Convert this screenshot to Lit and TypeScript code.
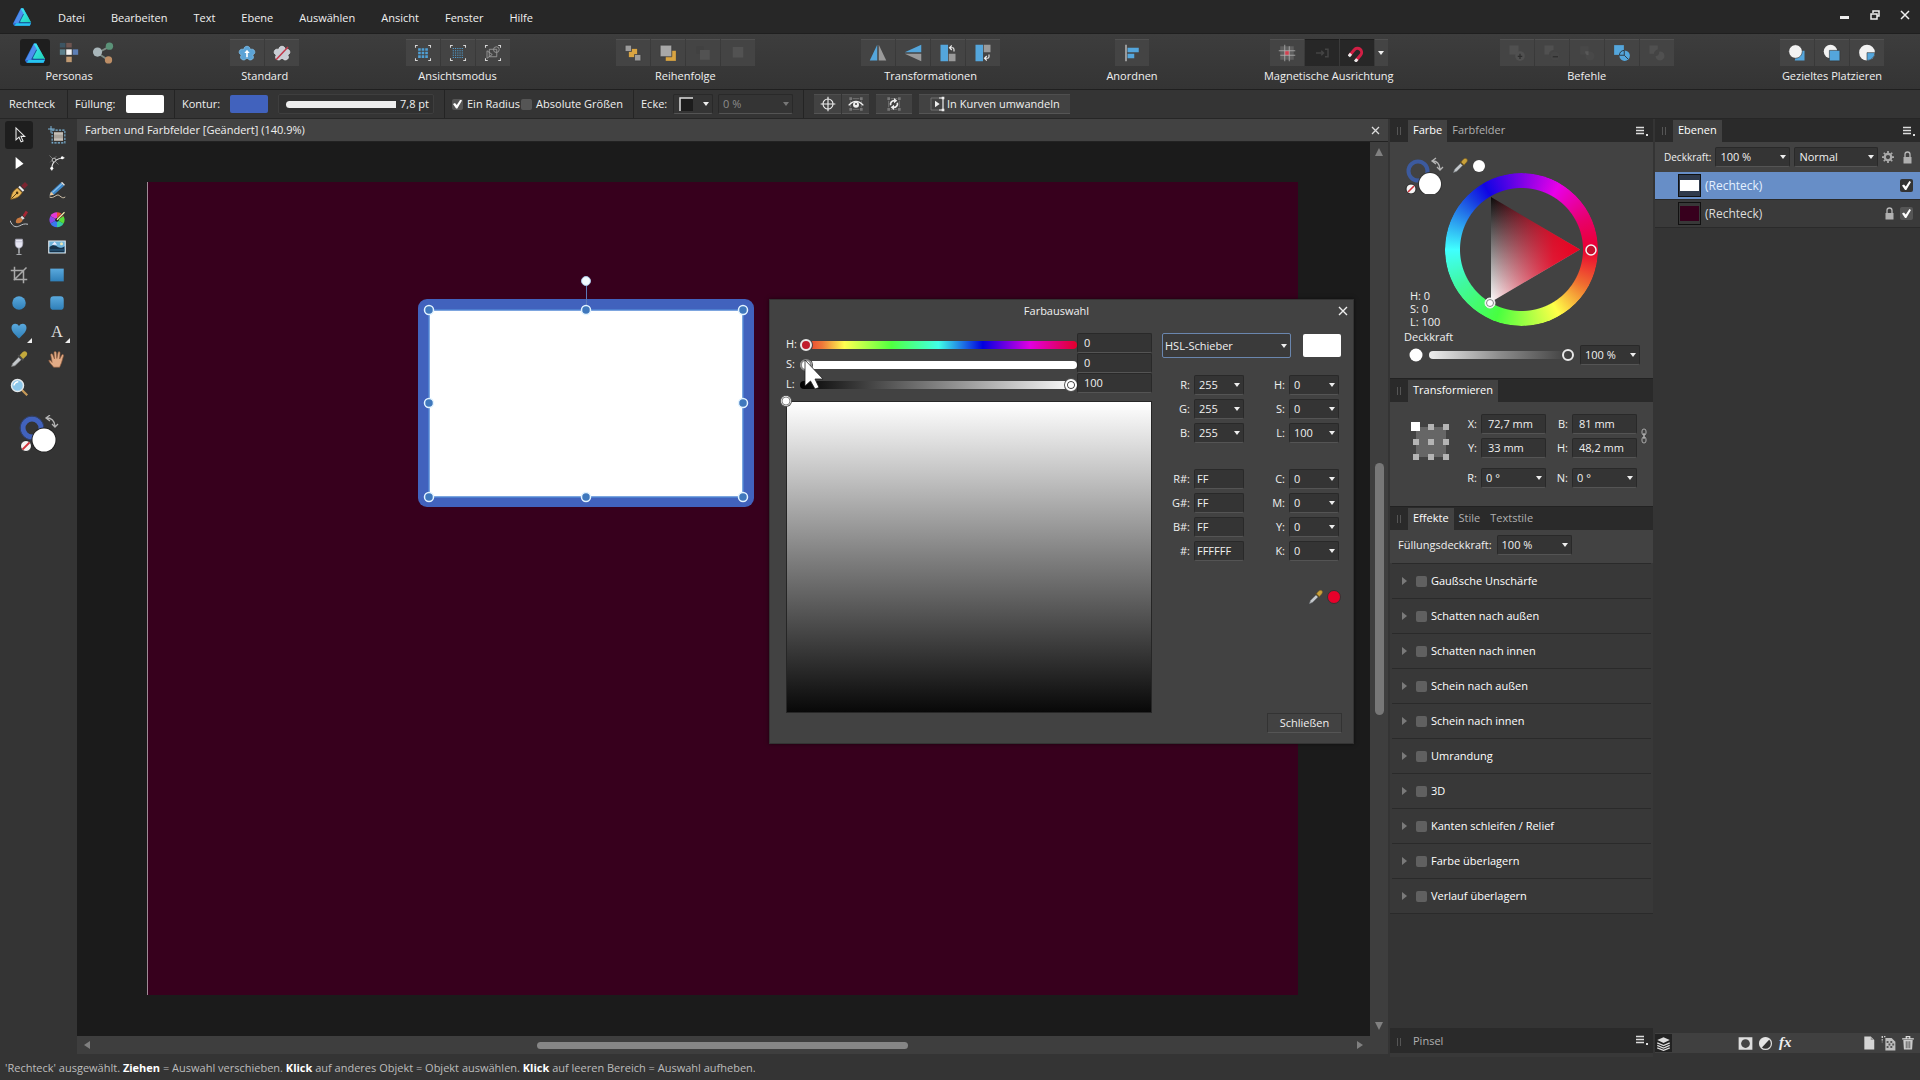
import { LitElement, html, css, svg, TemplateResult } from "lit";
import { customElement, state } from "lit/decorators.js";

const ico = (size: number, body: unknown) =>
  html`<svg width=${size} height=${size} viewBox="0 0 24 24" aria-hidden="true">${body}</svg>`;

/* ---------- Shared glyphs ---------- */
const logoBody = svg`
  <defs><linearGradient id="lg" x1="0" y1="0" x2="1" y2="1"><stop offset="0" stop-color="#3fe6ff"/><stop offset="1" stop-color="#1fd5b0"/></linearGradient></defs>
  <path d="M10.500 1.500h3L23 19l-1.500 3.500h-19L1 20z" fill="#2b6fd6"/>
  <path d="M11 1.500h2.500L23 18.500H10.500L8.600 15z" fill="url(#lg)"/>
  <path d="M10.800 2.500L2 19.500l6.200-.2L14 8z" fill="#4f8dee"/>
  <path d="M3 22.500l2-3h17.700l-1.500 3z" fill="#26c6f0"/>
  <path d="M13.800 8.500L8.500 18.800h13.800" fill="none" stroke="#124a86" stroke-width="1"/>`;

const dropper = (size: number) => ico(size, svg`
  <path d="M2 22l2-5 8-8 3 3-8 8z" fill="#c4c8cc" stroke="#6f7478" stroke-width=".8"/>
  <path d="M11 7l6 6 1.500-1.500-6-6z" fill="#5b4a20"/>
  <path d="M13 7.500c1-3 4-6 6.500-5.500 2.500.6 3 3.500 1 5.500l-3.500 3.700z" fill="#c9a13a" stroke="#7c6020" stroke-width=".8"/>`);

const nodeBox = svg`<path d="M4 7V17M20 7V17M7 4H17M7 20H17" stroke="#777" stroke-width="1.300"/>
  <path d="M2 2h4v4H2zM18 2h4v4h-4zM2 18h4v4H2zM18 18h4v4h-4z" fill="#777"/>`;

const corners = svg`<path d="M2 5V2h3M19 2h3v3M22 19v3h-3M5 22H2v-3" fill="none" stroke="#d8d8d8" stroke-width="1.400"/>`;

const flower = "M12 1c2.800 0 4.300 2.200 4.300 4.400 2.200-1 5-.5 5.900 2.100.9 2.500-.6 4.300-2.900 5 1.600 1.600 1.900 4.300-.2 5.900-2.200 1.500-4.900 1-6-1.100-.6.600-1.600.6-2.200 0-1.100 2.100-3.800 2.600-6 1.100-2.100-1.600-1.800-4.300-.2-5.900-2.300-.7-3.800-2.500-2.900-5 .9-2.600 3.700-3.100 5.900-2.100C7.700 3.200 9.200 1 12 1z";

const T = {
  personaPixel: svg`<path d="M2 1h6v5H2z" fill="#3d5563"/><path d="M9 1h6v5H9z" fill="#6e5550"/><path d="M2 8h6v6H2z" fill="#5d808c"/><path d="M9 8h6v6H9z" fill="#f2f2f2"/><path d="M16 8h6v6h-6z" fill="#5d7fb5"/><path d="M9 16h6v6H9z" fill="#c19a72"/>`,
  personaExport: svg`<path d="M6 12L19 5M6 12l12 8" stroke="#7d8a84" stroke-width="2"/><circle cx="6" cy="11" r="5" fill="#a9b6ba"/><circle cx="19" cy="4.500" r="4" fill="#5b9278"/><circle cx="18" cy="19.500" r="4" fill="#bd8e66"/>`,
  stdUp: svg`<path d=${flower} transform="translate(0 2)" fill="#5ba3d6" stroke="#83c0ea"/><path d="M12 17.500V11" stroke="#fff" stroke-width="2.200"/><path d="M8.500 12L12 7.500l3.500 4.500z" fill="#fff"/>`,
  stdNo: svg`<path d=${flower} transform="translate(0 2)" fill="#c9cdd4" stroke="#e4e6ea"/><path d="M4 21L20 4" stroke="#c0394b" stroke-width="2"/>`,
  viewGrid: svg`${corners}<path d="M5.500 5.500h3.500v3.500h-3.500zM10.200 5.500h3.500v3.500h-3.500zM15 5.500h3.500v3.500H15zM5.500 10.200h3.500v3.500h-3.500zM10.200 10.200h3.500v3.500h-3.500zM15 10.200h3.500v3.500H15zM5.500 15h3.500v3.500h-3.500zM10.200 15h3.500v3.500h-3.500zM15 15h3.500v3.500H15z" fill="#4f9fd4"/>`,
  viewDots: svg`${corners}<path d="M5 6h14M5 9h14M5 12h14M5 15h14M5 18h14" stroke="#4f9fd4" stroke-width="1.600" stroke-dasharray="1.500 1.500"/>`,
  viewOutline: svg`${corners}<g fill="none" stroke="#9a9a9a" stroke-width="1.200"><circle cx="16.500" cy="7.500" r="3.800"/><path d="M7 7h10v10H7zM4 9l7 5-7 5z"/></g>`,
  toBack: svg`<path d="M6.500 6.500h11v11h-11z" fill="#d9a441"/><path d="M1.500 1.500H10V10H1.500zM14 14h8.500v8.500H14z" fill="#9c9c9c" stroke="#3a3a3a" stroke-width="1"/>`,
  toFront: svg`<path d="M9 9h13.500v13.500H9z" fill="#d9a441"/><path d="M1.500 1.500H17V17H1.500z" fill="#a8a8a8" stroke="#3a3a3a" stroke-width="1"/>`,
  offA: svg`<path d="M3 3h10v10H3z" fill="#414141"/><path d="M8 8h13v13H8z" fill="#525252"/>`,
  offB: svg`<path d="M5 4h14v14H5z" fill="#525252"/>`,
  flipH: svg`<path d="M11 1v21H1z" fill="#54a6dc"/><path d="M13 1v21h10z" fill="#9a9a9a"/>`,
  flipV: svg`<path d="M23 11H1L23 1z" fill="#54a6dc"/><path d="M23 13H1l22 10z" fill="#9a9a9a"/>`,
  rotL: svg`<path d="M2 1h10v22H2z" fill="#54a6dc"/><path d="M13 13h9v10h-9z" fill="#9a9a9a"/><path d="M14 5h4q2 0 2 2.500V10M17 2l-3 3 3 3" fill="none" stroke="#eee" stroke-width="1.500"/>`,
  rotR: svg`<path d="M2 1h10v22H2z" fill="#54a6dc"/><path d="M13 1h9v10h-9z" fill="#9a9a9a"/><path d="M20 14v3q0 2-2 2h-4M17 16l-3 3 3 3" fill="none" stroke="#eee" stroke-width="1.500"/>`,
  align: svg`<path d="M4 1v22" stroke="#ddd" stroke-width="1.500"/><path d="M6 5h15v6H6zM6 13h9v6H6z" fill="#54a6dc"/>`,
  snapGrid: svg`<path d="M3 3h18v18H3z" fill="#5e5e5e"/><path d="M9 9h6v6H9z" fill="#d1404f"/><path d="M9 1v22M15 3v20M1 9h22M3 15h20" stroke="#b7b7b7" stroke-width="1"/>`,
  snapOff: svg`<path d="M4 12h10M11 9l3 3-3 3M16 7h4v10h-4" fill="none" stroke="#444" stroke-width="2"/>`,
  magnet: svg`<g transform="rotate(40 12 12)"><path d="M6.500 21v-10a5.500 5.500 0 0 1 11 0v10" fill="none" stroke="#d21f45" stroke-width="4"/><path d="M4.500 18h4v4.500h-4zM15.500 18h4v4.500h-4z" fill="#e8e8e8"/></g>`,
  boolOff1: svg`<path d="M2 2h12v12H2z" fill="#505050"/><circle cx="16" cy="16" r="6.500" fill="#505050"/><path d="M16 13v7M13 16.500h6" stroke="#2c2c2c" stroke-width="1.600"/>`,
  boolOff2: svg`<path d="M2 2h12v6q-6 1-6 6H2z" fill="#505050"/><circle cx="16" cy="16" r="6" fill="#464646"/><path d="M13 17h7" stroke="#2c2c2c" stroke-width="1.600"/>`,
  boolOff3: svg`<path d="M3 3h11v11H3z" fill="#484848"/><circle cx="16" cy="16" r="6" fill="#484848"/><path d="M9.500 9.500h4.500v5.500q-4.500 0-4.500-5.500z" fill="#585858"/>`,
  boolOn: svg`<path d="M1.500 1.500h13v13h-13z" fill="#54a6dc"/><circle cx="15.500" cy="15.500" r="7" fill="#54a6dc"/><path d="M8.500 15a7 7 0 0 1 6.500-6.500V15zM15 15l5 5" fill="none" stroke="#2d3a44" stroke-width="1.300"/>`,
  boolOff4: svg`<path d="M2 2h11v5q-5 2-5 6H2z" fill="#505050"/><path d="M15 10a6 6 0 1 1-5 6q5 0 5-6z" fill="#505050"/>`,
  placeA: svg`<path d="M12 9h10v13H9z" fill="#54a6dc"/><circle cx="10" cy="10" r="9" fill="#f2f2f2" stroke="#333" stroke-width=".8"/>`,
  placeB: svg`<circle cx="10" cy="10" r="9" fill="#f2f2f2"/><path d="M8.500 8.500h14v14h-14z" fill="#54a6dc" stroke="#333" stroke-width=".8"/>`,
  placeC: svg`<circle cx="12" cy="11.500" r="10.500" fill="#f2f2f2"/><path d="M12 11.500h10.500A10.500 10.500 0 0 1 12 22z" fill="#54a6dc" stroke="#333" stroke-width=".8"/>`,
};

/* ---------- Tool palette ---------- */
const tools: { name: string; body: TemplateResult<2>; more?: boolean }[] = [
  { name: "Verschieben", body: svg`<path d="M8 2.500v16l4-3.800 2.800 6.500 2.600-1.200-2.800-6.200h5z" fill="#222" stroke="#eee" stroke-width="1.400"/>` },
  { name: "Zeichenfläche", body: svg`<path d="M5.500 5.500h17v17h-17z" fill="none" stroke="#7db7dc" stroke-width="1.400" stroke-dasharray="3 1.500"/><path d="M8 8h12v12H8z" fill="#a9a39b"/><path d="M8 10.500h12M8 17.500h12" stroke="#e6e2dc"/><path d="M4 0v9M0 4h9" stroke="#7db7dc" stroke-width="1.300"/>` },
  { name: "Knoten", body: svg`<path d="M7.500 4v16L18 13z" fill="#fff"/>` },
  { name: "Ecken", body: svg`<path d="M5 22Q4 6 22 5" fill="none" stroke="#e8e8e8" stroke-width="1.500"/><path d="M2 2l12 12M11 3l-8 8" stroke="#8a8a8a"/><circle cx="5" cy="19" r="2" fill="#fff"/><circle cx="19" cy="5" r="2" fill="#fff"/><circle cx="8" cy="8" r="2.500" fill="#333" stroke="#ddd"/>` },
  { name: "Zeichenstift", body: svg`<path d="M1 23C2 16 4 11 10 8l6 6c-3 6-8 8-15 9z" fill="#e9b758" stroke="#8a5f1c"/><path d="M2 22l7-7" stroke="#4a3410" stroke-width="1.200"/><circle cx="9.500" cy="14.500" r="1.700" fill="#4a3410"/><path d="M11 7l2-2 6 6-2 2z" fill="#eee"/><path d="M15 5l5-5 4 4-5 5z" fill="#7b2430"/>` },
  { name: "Bleistift", body: svg`<path d="M2 18l2-5L17 1l4.500 4L8 17z" fill="#3f88c8"/><path d="M6 14L18.500 2.500" stroke="#8bc2ee" stroke-width="1.500"/><path d="M2 18l2-5 4 4z" fill="#f0c898"/><path d="M17 1l2-1 3.500 3.500-1 1.500z" fill="#e4e4e4"/><path d="M2 20c6 3 9-5 13-2s5 4 8 2" fill="none" stroke="#d5c6ae" stroke-width="1.300"/>` },
  { name: "Vektorpinsel", body: svg`<path d="M8 17c-1-4 2-7 6-7l3 3c-1 4-5 6-9 4z" fill="#c9793f"/><path d="M14 10l2-2.500 3.500 3.500L17 13z" fill="#ddd"/><path d="M17 7l4-6 3 2-4.500 7z" fill="#a52633"/><path d="M0 14c4 10 9 9 13 7s6-3 11-2" fill="none" stroke="#c4cacf" stroke-width="1.300"/>` },
  { name: "Farbverlauf", body: svg`<circle cx="12" cy="13" r="10" fill="#333"/><path d="M12 13L12 3A10 10 0 0 0 3.300 8z" fill="#e33ad4"/><path d="M12 13L3.300 8A10 10 0 0 0 3.300 18z" fill="#8848e8"/><path d="M12 13L3.300 18A10 10 0 0 0 12 23z" fill="#3a76f0"/><path d="M12 13v10A10 10 0 0 0 20.700 18z" fill="#37c8a0"/><path d="M12 13l8.700 5A10 10 0 0 0 20.700 8z" fill="#57dd38"/><path d="M12 13l8.700-5A10 10 0 0 0 12 3z" fill="#ee4a3a"/><circle cx="12" cy="13" r="2.500" fill="#222"/><path d="M12 13L22 3" stroke="#222" stroke-width="3"/><path d="M12 13L22 3" stroke="#f4f4b0" stroke-width="1.600"/>` },
  { name: "Transparenz", body: svg`<path d="M7.500 1.500h9c1.500 7 0 12-4.500 12S6 8.500 7.500 1.500z" fill="#e6e6f2" stroke="#a7a7b8"/><path d="M8 5h8" stroke="#b9b9cf"/><path d="M12 13.500v7" stroke="#cfd2d8" stroke-width="1.600"/><path d="M7.500 22.300q4.500-2.800 9 0z" fill="#cfd2d8"/>` },
  { name: "Bild platzieren", body: svg`<path d="M1 4h22v16H1z" fill="#6fb4dc" stroke="#dfe6ea" stroke-width="1.500"/><path d="M2 12c5-4 8-2 11 0s6 1 9-1v8H2z" fill="#16324a"/><path d="M5 9l4-4 3 4z" fill="#eef"/><circle cx="18" cy="7.500" r="2" fill="#efe6b2"/><path d="M2 16h20" stroke="#2b5f86" stroke-width="1.500"/>` },
  { name: "Beschneiden", body: svg`<path d="M6 1v17h17M1 6h17v17M5 19L22 2" fill="none" stroke="#a9a9a9" stroke-width="2"/>` },
  { name: "Rechteck", body: svg`<path d="M3 3.500h18v17H3z" fill="url(#blue)"/>` },
  { name: "Ellipse", body: svg`<circle cx="12" cy="12" r="9" fill="url(#blue)"/>` },
  { name: "Abgerundetes Rechteck", body: svg`<rect x="3" y="3" width="18" height="18" rx="4.500" fill="url(#blue)"/>` },
  { name: "Herz", more: true, body: svg`<path d="M12 22C7 16.500 2 13 2 7.500 2 1.500 9.500.5 12 5.500 14.500.5 22 1.500 22 7.500 22 13 17 16.500 12 22z" fill="url(#blue)"/>` },
  { name: "Grafiktext", more: true, body: svg`<text x="12" y="20" text-anchor="middle" font-family="Liberation Serif, serif" font-size="22" fill="#e0e0e0">A</text>` },
  { name: "Farbpipette", body: svg`<path d="M2 22l1.500-4 8-8.500 3.500 3.500-8.500 8z" fill="#c4c8cc" stroke="#777"/><path d="M10 7.500l7 7 1.500-2-6.500-6.500z" fill="#4a4a4a"/><path d="M13 7l4-4.500q3-2 5 .3t0 5L17.500 12z" fill="#c3a93c"/>` },
  { name: "Ansicht", body: svg`<path d="M7.500 23c-2-3-5.500-5.500-6.500-9 1.500-1 3 .5 4.500 2.500L3.500 6c1-1.500 2.500-1 3 .5L8.700 12 8 3c1-1.500 2.700-1.200 3 .3l.8 8L13.500 3c1-1.200 2.700-.7 2.600.8l-.6 8.200 3-5.500c1-1 2.500-.3 2.200 1.200L18 17l-2.500 6z" fill="#e2ab86" stroke="#8d5b3d" stroke-width=".9"/>` },
  { name: "Zoom", body: svg`<path d="M16 16l7 7" stroke="#c79a58" stroke-width="3"/><circle cx="10" cy="10" r="8" fill="#8cc7ea" stroke="#e4e9ec" stroke-width="2"/><path d="M5 10q2-5 6-5" fill="none" stroke="#fff" stroke-width="1.700"/>` },
];

const effects = ["Gaußsche Unschärfe", "Schatten nach außen", "Schatten nach innen", "Schein nach außen", "Schein nach innen",
  "Umrandung", "3D", "Kanten schleifen / Relief", "Farbe überlagern", "Verlauf überlagern"];

const groups: { label: string; cls?: string; buttons: { name: string; body: unknown; on?: boolean }[] }[] = [
  { label: "Personas", cls: "personas", buttons: [
    { name: "Designer-Persona", body: logoBody, on: true }, { name: "Pixel-Persona", body: T.personaPixel }, { name: "Export-Persona", body: T.personaExport }] },
  { label: "Standard", buttons: [{ name: "Standard übernehmen", body: T.stdUp }, { name: "Standard zurücksetzen", body: T.stdNo }] },
  { label: "Ansichtsmodus", buttons: [{ name: "Pixel", body: T.viewGrid }, { name: "Retina", body: T.viewDots }, { name: "Kontur", body: T.viewOutline }] },
  { label: "Reihenfolge", buttons: [{ name: "Nach hinten", body: T.toBack }, { name: "Zurück", body: T.toFront }, { name: "Vorwärts", body: T.offA }, { name: "Nach vorn", body: T.offB }] },
  { label: "Transformationen", buttons: [{ name: "Horizontal spiegeln", body: T.flipH }, { name: "Vertikal spiegeln", body: T.flipV }, { name: "Links drehen", body: T.rotL }, { name: "Rechts drehen", body: T.rotR }] },
  { label: "Anordnen", buttons: [{ name: "Ausrichten", body: T.align }] },
  { label: "Magnetische Ausrichtung", cls: "snap", buttons: [{ name: "Raster", body: T.snapGrid }, { name: "An Pixeln", body: T.snapOff, on: true }, { name: "Magnet", body: T.magnet, on: true }] },
  { label: "Befehle", buttons: [{ name: "Addieren", body: T.boolOff1 }, { name: "Subtrahieren", body: T.boolOff2 }, { name: "Schnittmenge", body: T.boolOff3 }, { name: "Aufteilen", body: T.boolOn }, { name: "Kombinieren", body: T.boolOff4 }] },
  { label: "Gezieltes Platzieren", buttons: [{ name: "Dahinter", body: T.placeA }, { name: "Davor", body: T.placeB }, { name: "Innen", body: T.placeC }] },
];

@customElement("app-root")
export class AppRoot extends LitElement {
  @state() private tool = "Verschieben";

  static styles = css`
    :host {
      display: flex;
      flex-direction: column;
      min-height: 100vh;
      background: #343434;
      color: #f0f0f0;
      font: 11px/16px "Open Sans", "Noto Sans", sans-serif;
      overflow: hidden;
    }
    * { box-sizing: border-box; }
    svg { display: block; flex: none; }
    button, input, select { font: inherit; color: inherit; margin: 0; border-radius: 0; }
    button { background: none; border: 0; padding: 0; display: grid; place-items: center; }
    a { color: inherit; text-decoration: none; }
    .defs { position: absolute; width: 0; height: 0; }

    .menubar { display: flex; align-items: center; height: 33px; padding: 0 10px 0 12px; gap: 26px; background: #272727; }
    .menubar nav { display: flex; gap: 26px; flex: 1; padding-top: 2px; }
    .window { display: flex; gap: 20px; padding-bottom: 4px; }

    .toolbar { display: flex; justify-content: space-between; height: 57px; padding: 5px 36px 0 20px;
      background: linear-gradient(#3d3d3d, #343434); border-top: 1px solid #1f1f1f; border-bottom: 1px solid #1f1f1f; }
    .group { display: flex; flex-direction: column; align-items: center; gap: 2px; }
    .group .btns { display: flex; gap: 1px; }
    .group button { width: 34px; height: 27px; background: #444; border-top: 1px solid #505050; }
    .group button.on { background: #272727; border-color: #1d1d1d; }
    .group button.arrow { width: 13px; }
    .personas { padding-right: 6px; }
    .personas .btns { gap: 4px; }
    .personas button { width: 30px; background: none; border: 0; }
    .personas button.on { background: #1e1e1e; border-radius: 3px; }

    .context { display: flex; align-items: center; height: 29px; background: #343434; border-bottom: 1px solid #262626; white-space: nowrap; }
    .sect { display: flex; flex: none; align-items: center; justify-content: space-between; height: 28px; padding: 0 10px 0 7px; border-right: 1px solid #242424; }
    .s1 { width: 68px; padding-left: 9px; }
    .s2 { width: 107px; }
    .s3 { width: 270px; }
    .s4 { width: 189px; }
    .s5 { width: 170px; }
    .s6 { gap: 7px; padding-left: 10px; border: 0; }
    .swatch { width: 38px; height: 18px; border-radius: 2px; background: #fff; }
    .swatch.blue { background: #4162bd; }
    .stroke { display: flex; align-items: center; gap: 4px; width: 156px; height: 20px; padding: 0 4px 0 7px; background: #303030; border: 1px solid #3e3e3e; border-radius: 2px; }
    .bar { flex: 1; height: 7px; background: #eee; border-radius: 4px 0 0 4px; }
    .pair { display: flex; gap: 1px; }
    .flat { height: 20px; min-width: 27px; background: #424242; border-top: 1px solid #4e4e4e; border-bottom: 1px solid #555; }
    .flat.wide { width: 36px; }
    .flat.text { display: flex; align-items: center; gap: 2px; padding: 0 10px; }
    label { display: flex; align-items: center; gap: 4px; }

    input[type="checkbox"] { appearance: none; width: 11px; height: 11px; background: #555; border-radius: 2px; display: grid; place-items: center; flex: none; }
    input[type="checkbox"]:checked::before { content: ""; width: 9px; height: 9px; background: #fff;
      clip-path: polygon(0 50%, 22% 38%, 42% 62%, 82% 0, 100% 10%, 48% 100%, 34% 100%); }

    .field { height: 20px; width: 100%; min-width: 0; padding: 0 6px; background: #343434; border: 1px solid #292929; border-bottom-color: #545454; border-radius: 2px; outline: 0; }
    input.field { padding-bottom: 2px; }
    input.field.hex { padding: 0 2px 2px; }
    select.field { appearance: none; padding: 0 4px; }
    .sel { position: relative; display: block; flex: none; }
    .sel::after { content: ""; position: absolute; right: 4px; top: 8px; border: 3px solid transparent; border-top: 4px solid #eee; border-bottom: 0; pointer-events: none; }
    .sel.dim { color: #8c8c8c; }
    .sel.dim::after { border-top-color: #777; }
    .sel.w40 { width: 40px; } .sel.w75 { width: 75px; } .sel.w84 { width: 84px; } .sel.w129 { width: 129px; }
    .corner { position: absolute; left: 6px; top: 3px; pointer-events: none; }

    .body { display: grid; grid-template-columns: 75px minmax(0, 1fr) 263px 265px; gap: 2px; flex: 1; }

    .tools { padding-top: 2px; }
    .toolgrid { display: grid; grid-template-columns: 28px 28px; gap: 0 10px; padding-left: 5px; }
    .toolgrid button { position: relative; width: 28px; height: 28px; border-radius: 3px; }
    .toolgrid button.on { background: #1e1e1e; }
    .toolgrid button.more::after { content: ""; position: absolute; right: 1px; bottom: 2px; border: solid transparent; border-width: 0 0 5px 5px; border-bottom-color: #eee; }
    .well { margin: 14px 0 0 19px; display: block; }

    .doc { display: grid; grid-template: 23px minmax(0, 1fr) 18px / minmax(0, 1fr) 18px; padding-bottom: 3px; }
    .doctab { grid-column: 1 / 3; display: flex; align-items: center; justify-content: space-between; padding: 0 8px; background: #424242; border-bottom: 1px solid #222; }
    .canvas { position: relative; overflow: hidden; background: #1b1b1b; }
    .board { position: absolute; left: 70px; top: 40px; width: 1151px; height: 813px; background: #37001d; border-left: 1px solid #a08a96; }
    .sel-rect { position: absolute; left: 335px; top: 130px; }
    .vs, .hs { display: flex; align-items: center; justify-content: space-between; background: #3e3e3e; }
    .vs { flex-direction: column; padding: 6px 0; }
    .hs { grid-column: 1 / 3; padding: 0 24px 0 6px; }
    .vs i { width: 9px; height: 252px; margin-top: 307px; margin-bottom: auto; border-radius: 5px; background: #777; }
    .hs i { height: 7px; width: 371px; margin-left: 446px; margin-right: auto; border-radius: 4px; background: #868686; }

    .dialog { position: absolute; left: 769px; top: 299px; width: 585px; background: #424242; border: 1px solid #333; box-shadow: 0 0 4px #0008; }
    .dtitle { display: flex; align-items: center; height: 22px; padding: 0 5px; }
    .dtitle h2 { flex: 1; margin: 0; font-size: 11px; font-weight: 400; text-align: center; }
    .dbody { display: grid; grid-template-columns: 366px 180px; gap: 10px; padding: 11px 11px 10px 16px; }
    .sliders { display: grid; grid-template-columns: 14px 277px 75px; align-items: center; margin-bottom: 8px; }
    .sliders label { padding-top: 2px; }
    .sliders input[type="range"] { margin-top: 3px; }
    input[type="range"] { appearance: none; width: 100%; height: 8px; border-radius: 4px; outline: 0; }
    input[type="range"]::-webkit-slider-thumb { appearance: none; width: 12px; height: 12px; border-radius: 6px; border: 2px solid #e8e8e8; background: transparent; box-shadow: 0 0 0 1px #444; }
    .hue { background: linear-gradient(90deg, #e2242a, #f0783a 8%, #ffff50 16%, #50ff40 33%, #40ffe8 50%, #0000e0 66%, #e000e0 83%, #e2002a); }
    .hue::-webkit-slider-thumb { background: #c01c2c !important; }
    .satr { background: #fff; }
    .lumr { background: linear-gradient(90deg, #000, #111 5%, #fff); }
    .lumr::-webkit-slider-thumb { background: #fff !important; border-color: #fff !important; box-shadow: inset 0 0 0 1px #444, 0 0 0 1px #555 !important; }
    .satr::-webkit-slider-thumb { border-color: #888 !important; }
    .ramp { position: relative; height: 312px; margin-bottom: 20px; border: 1px solid #262626; background: linear-gradient(#fff, #808080 50%, #080808); }
    .ramp svg { position: absolute; left: -8px; top: -8px; }
    .right { display: flex; flex-direction: column; }
    .modes { display: flex; gap: 12px; }
    .modes .field { height: 25px; background: #3a3a3a; border: 1px solid #6a86ae; padding: 0 2px; }
    .modes .sel::after { top: 11px; }
    .modes .swatch { height: 23px; margin-top: 1px; }
    .nums { display: grid; grid-template-columns: 28px 50px 37px 50px; gap: 4px; margin-top: 17px; }
    .nums + .nums { margin-top: 26px; }
    .nums label { justify-content: flex-end; }
    .picker { display: flex; justify-content: flex-end; align-items: center; gap: 2px; margin-top: 28px; }
    .close { margin: auto 0 0 auto; width: 75px; height: 20px; background: #424242; border: 1px solid #333; border-bottom-color: #555; }
    .pointer { position: absolute; left: 803px; top: 360px; }

    .col { display: flex; flex-direction: column; background: #383838; }
    .tabs { display: flex; align-items: flex-end; height: 23px; padding: 0 4px 0 7px; background: #2a2a2a; }
    .tabs .grip { width: 4px; height: 8px; margin: 0 7px 7px 0; border: solid #555; border-width: 0 1px; }
    .tabs button { height: 22px; padding: 0 5px 2px; color: #b0b0b0; }
    .tabs button.on { background: #424242; color: #fff; }
    .tabs .menu { height: 14px; padding: 0; margin: 0 0 4px auto; }
    .tabs.sub { height: 24px; border-top: 1px solid #222; }
    .color { padding: 14px 13px 13px 14px; background: #424242; }
    .color > label { margin-top: 1px; }
    .colortop { position: relative; display: flex; }
    .colorleft { display: flex; flex-direction: column; justify-content: space-between; width: 41px; height: 172px; }
    .hsl { line-height: 13px; padding-left: 6px; white-space: nowrap; display: grid; }
    .wheel { position: relative; width: 153px; height: 153px; margin-top: 17px; }
    .ring { position: absolute; inset: 0; border-radius: 50%;
      background: conic-gradient(from 90deg, #ea0030, #f07030 30deg, #ffff48 60deg, #48ff40 110deg, #40f8a0 150deg, #40ffff 180deg, #1840e0 225deg, #1004e4 240deg, #e800e8 300deg, #e8006a 335deg, #ea0030);
      -webkit-mask: radial-gradient(circle, transparent 61px, #000 62px); mask: radial-gradient(circle, transparent 61px, #000 62px); }
    .wheel svg { position: absolute; left: 0; top: 0; }
    .pick2 { position: absolute; left: 48px; top: 1px; display: flex; align-items: center; gap: 3px; }
    .opacity { display: grid; grid-template-columns: 14px 145px 60px; align-items: center; gap: 6px; padding-left: 5px; }
    .opacity input { background: linear-gradient(90deg, #eee, #8a8a8a 50%, #3a3a3a); }

    .transform { display: grid; grid-template-columns: 58px 21px 65px 18px 65px 6px; gap: 4px; padding: 12px 0 18px 4px; background: #424242; }
    .transform label { justify-content: flex-end; }
    .anchor { grid-area: 1 / 1 / 4 / 2; margin: 8px 0 0 17px; }
    .gap { margin-top: 6px; }
    .link { grid-area: 1 / 6 / 3 / 7; align-self: center; }
    .filldeck { display: flex; align-items: center; gap: 5px; height: 33px; padding: 0 8px 4px; background: #424242; }
    .effect { height: 35px; display: flex; align-items: center; gap: 9px; padding-left: 10px; border-top: 1px solid #2a2a2a; margin: 0 2px; }
    .effects { border-bottom: 1px solid #2a2a2a; }
    .effect::before { content: ""; border: 4px solid transparent; border-left: 5px solid #7a7a7a; border-right: 0; }
    .effect label { color: #fff; }
    .effect input { background: #606060; }
    .fill { flex: 1; background: #343434; }
    .tabs.brush { margin-bottom: 4px; height: 25px; }
    .tabs.brush .menu { margin-bottom: 6px; }

    .layers { background: #343434; display: flex; flex-direction: column; }
    .lopts { display: flex; align-items: center; gap: 4px; height: 30px; padding: 0 8px 0 9px; background: #424242; }
    .lopts label { font-size: 10px; }
    .lopts svg:last-child { margin-left: auto; }
    .layer { display: flex; align-items: center; gap: 4px; height: 28px; padding: 0 7px 0 23px; background: #3a3a3a; border-bottom: 1px solid #2a2a2a; color: #dcdcdc; font-size: 12px; }
    .layer.on { background: #678ec7; color: #e4f0ff; }
    .layer span { flex: 1; }
    .thumb { width: 23px; height: 23px; border: 1px solid #111; background: #2f3a4c; padding: 5px 1px; }
    .thumb i { display: block; height: 100%; background: #fff; }
    .thumb.wine { background: #383838; padding: 3px 1px; }
    .thumb.wine i { background: #37001d; }
    .layer input[type="checkbox"] { width: 13px; height: 13px; margin-left: 2px; }
    .layer.on input[type="checkbox"] { background: #333; }
    .lbar { display: flex; align-items: center; justify-content: space-between; height: 20px; padding: 0 5px 0 0; background: #404040; margin-bottom: 4px; }
    .lbar div { display: flex; gap: 5px; }
    .lbar .dark { background: #222; width: 17px; height: 18px; }

    .status { height: 23px; padding: 3px 5px; color: #bdbdbd; }
    .status b { color: #fff; }
  `;

  private field(id: string, label: string, value: string, drop: boolean, extra = "") {
    return html`<label for=${id} class=${extra}>${label}</label>
      ${drop
        ? html`<span class="sel ${extra}"><select class="field" id=${id}><option>${value}</option></select></span>`
        : html`<input class="field ${extra}" id=${id} .value=${value} />`}`;
  }

  private well() {
    return html`<svg class="well" width="40" height="38" viewBox="0 0 40 38" aria-hidden="true">
      <circle cx="13" cy="13" r="9" fill="none" stroke="#4162bd" stroke-width="5"/>
      <circle cx="13" cy="13" r="12" fill="none" stroke="#30406c"/>
      <circle cx="25" cy="25" r="12.500" fill="#222"/><circle cx="25" cy="25" r="11.500" fill="#fff"/>
      <circle cx="7" cy="31" r="5.500" fill="#f4f4f4" stroke="#222"/><path d="M3.500 34.500l7-7" stroke="#d0343c" stroke-width="1.800"/>
      <path d="M28 3q7 0 8 8M31 0l-4 3 4 3M33 9l3 3 3-3" fill="none" stroke="#b5b5b5" stroke-width="1.300"/></svg>`;
  }

  private menuIcon() {
    return html`<button class="menu" aria-label="Bedienfeldmenü"><svg width="14" height="11" viewBox="0 0 14 11"><path d="M1 1.500h8M1 4.500h8M1 7.500h8" stroke="#ddd" stroke-width="1.500"/><path d="M11 8h2v2h-2z" fill="#ddd"/></svg></button>`;
  }

  private tri(d: string) {
    return html`<svg width="8" height="8" viewBox="0 0 8 8" aria-hidden="true"><path d=${d} fill="#808080"/></svg>`;
  }

  private lock() {
    return html`<svg width="9" height="13" viewBox="0 0 9 13" aria-hidden="true"><path d="M2 6V3.500a2.500 2.500 0 0 1 5 0V6" fill="none" stroke="#b8b8b8" stroke-width="1.300"/><path d="M.5 6h8v6.500h-8z" fill="#b0b0b0"/></svg>`;
  }

  private renderTop() {
    return html`
      <header class="menubar">
        ${ico(20, logoBody)}
        <nav>${["Datei", "Bearbeiten", "Text", "Ebene", "Auswählen", "Ansicht", "Fenster", "Hilfe"].map((m) => html`<a href="#">${m}</a>`)}</nav>
        <div class="window">
          <button aria-label="Minimieren"><svg width="10" height="10" viewBox="0 0 10 10"><path d="M0 6h9v3H0z" fill="#eee"/></svg></button>
          <button aria-label="Wiederherstellen"><svg width="10" height="10" viewBox="0 0 10 10"><path d="M3 3V1h6v5H7M1 4h6v5H1z" fill="none" stroke="#eee" stroke-width="1.500"/></svg></button>
          <button aria-label="Schließen"><svg width="10" height="10" viewBox="0 0 10 10"><path d="M1 1l8 8M9 1L1 9" stroke="#eee" stroke-width="1.500"/></svg></button>
        </div>
      </header>
      <div class="toolbar">
        ${groups.map((g) => html`<div class="group ${g.cls ?? ""}">
          <div class="btns">
            ${g.buttons.map((b) => html`<button class=${b.on ? "on" : ""} aria-label=${b.name}>${ico(g.cls === "personas" ? 22 : 18, b.body)}</button>`)}
            ${g.cls === "snap" ? html`<button class="arrow" aria-label="Optionen"><svg width="6" height="4" viewBox="0 0 6 4"><path d="M0 0h6L3 4z" fill="#eee"/></svg></button>` : ""}
          </div><span>${g.label}</span></div>`)}
      </div>
      <div class="context">
        <div class="sect s1">Rechteck</div>
        <div class="sect s2">Füllung:<button class="swatch" aria-label="Füllung"></button></div>
        <div class="sect s3">Kontur:<button class="swatch blue" aria-label="Kontur"></button>
          <div class="stroke"><span class="bar"></span>7,8 pt</div></div>
        <div class="sect s4">
          <label><input type="checkbox" checked />Ein Radius</label>
          <label><input type="checkbox" />Absolute Größen</label>
        </div>
        <div class="sect s5"><label for="ecke">Ecke:</label>
          <span class="sel w40"><select class="field" id="ecke" aria-label="Ecke"></select>
            <svg class="corner" width="14" height="14" viewBox="0 0 14 14"><path d="M1 1h13v13H1z" fill="#1c1c1c"/><path d="M1 14V1h13" fill="none" stroke="#ddd" stroke-width="1.500"/></svg></span>
          <span class="sel dim w75"><select class="field" aria-label="Eckenradius"><option>0 %</option></select></span></div>
        <div class="sect s6">
          <div class="pair">
            <button class="flat" aria-label="Ziel">${ico(16, svg`<circle cx="12" cy="12" r="7.500" fill="none" stroke="#eee" stroke-width="1.700"/><path d="M12 1v22M1 12h22" stroke="#eee" stroke-width="1.700"/>`)}</button>
            <button class="flat" aria-label="Auswahlrahmen">${ico(16, svg`${nodeBox}<path d="M1 14Q12 2 23 14" fill="none" stroke="#eee" stroke-width="2"/><circle cx="12" cy="13" r="4.500" fill="#eee"/><circle cx="12" cy="12" r="1.500" fill="#444"/>`)}</button>
          </div>
          <button class="flat wide" aria-label="Aktualisieren">${ico(16, svg`${nodeBox}<path d="M7 14a5.500 5.500 0 0 1 6-7M17 10a5.500 5.500 0 0 1-6 7" fill="none" stroke="#eee" stroke-width="2.500"/><path d="M12 3l5 4-5 4zM12 13l-5 4 5 4z" fill="#eee"/>`)}</button>
          <button class="flat text">${ico(16, svg`<path d="M3 3h18M3 21h18M3 3v18" stroke="#777" stroke-width="1.300"/><path d="M15 3h6v18h-6" fill="none" stroke="#eee" stroke-width="1.800"/><path d="M9 7v10l7-5z" fill="#eee"/><path d="M19 1h4v4h-4zM19 19h4v4h-4z" fill="#eee"/>`)}In Kurven umwandeln</button>
        </div>
      </div>`;
  }

  private renderDoc() {
    const pts = [[95, 46], [252, 46], [409, 46], [95, 139], [409, 139], [95, 233], [252, 233], [409, 233]];
    return html`<main class="doc">
      <div class="doctab"><span>Farben und Farbfelder [Geändert] (140.9%)</span>
        <button aria-label="Dokument schließen"><svg width="9" height="9" viewBox="0 0 9 9"><path d="M1 1l7 7M8 1L1 8" stroke="#ddd" stroke-width="1.300"/></svg></button></div>
      <div class="canvas">
        <div class="board"></div>
        <svg class="sel-rect" width="350" height="240" viewBox="78 8 350 240">
          <rect x="84" y="35" width="336" height="208" rx="9" fill="#4162bd"/>
          <path d="M95.500 46.500h313v186h-313z" fill="#fff"/>
          <path d="M252.500 17v26" stroke="#5b78b8"/>
          <path d="M95 46h314v187H95z" fill="none" stroke="#5b9ae0"/>
          ${pts.map(([x, y]) => svg`<circle cx=${x} cy=${y} r="4.500" fill="#3f78bd" stroke="#e2f3ff" stroke-width="1.500"/>`)}
          <circle cx="252" cy="17" r="4.500" fill="#f2faff" stroke="#a9c4e4"/>
        </svg>
      </div>
      <div class="vs">${this.tri("M4 0l4 8H0z")}<i></i>${this.tri("M0 0h8L4 8z")}</div>
      <div class="hs">${this.tri("M7 0v8L1 4z")}<i></i>${this.tri("M1 0v8l6-4z")}</div>
    </main>`;
  }

  private renderDialog() {
    const f = (l: string, v: string, drop = true, extra = "") => this.field("c" + l, l, v, drop, extra);
    return html`<section class="dialog" role="dialog" aria-label="Farbauswahl">
      <div class="dtitle"><h2>Farbauswahl</h2><button aria-label="Dialog schließen"><svg width="10" height="10" viewBox="0 0 10 10"><path d="M1 1l8 8M9 1L1 9" stroke="#eee" stroke-width="1.400"/></svg></button></div>
      <div class="dbody">
        <div>
          <div class="sliders">
            <label for="sh">H:</label><input class="hue" type="range" id="sh" max="360" .value=${"0"} /><input class="field" aria-label="H-Wert" .value=${"0"} />
            <label for="ss">S:</label><input class="satr" type="range" id="ss" .value=${"0"} /><input class="field" aria-label="S-Wert" .value=${"0"} />
            <label for="sl">L:</label><input class="lumr" type="range" id="sl" .value=${"100"} /><input class="field" aria-label="L-Wert" .value=${"100"} />
          </div>
          <div class="ramp"><svg width="14" height="14" viewBox="0 0 14 14"><circle cx="7" cy="7" r="6" fill="#555"/><circle cx="7" cy="7" r="5" fill="#fff"/><circle cx="7" cy="7" r="4" fill="none" stroke="#666" stroke-width=".8"/></svg></div>
        </div>
        <div class="right">
          <div class="modes"><span class="sel w129"><select class="field" aria-label="Farbmodell"><option>HSL-Schieber</option></select></span><span class="swatch"></span></div>
          <div class="nums">${f("R:", "255")}${f("H:", "0")}${f("G:", "255")}${f("S:", "0")}${f("B:", "255")}${f("L:", "100")}</div>
          <div class="nums">${f("R#:", "FF", false, "hex")}${f("C:", "0")}${f("G#:", "FF", false, "hex")}${f("M:", "0")}${f("B#:", "FF", false, "hex")}${f("Y:", "0")}${f("#:", "FFFFFF", false, "hex")}${f("K:", "0")}</div>
          <div class="picker">${dropper(16)}<svg width="16" height="16" viewBox="0 0 16 16"><circle cx="8" cy="8" r="6.500" fill="#e8002a" stroke="#333"/></svg></div>
          <button class="close">Schließen</button>
        </div>
      </div>
    </section>
    <svg class="pointer" width="22" height="30" viewBox="0 0 22 30"><path d="M2 0v26l5.500-5 4.500 8 4-1.500-4-8.500H20z" fill="#fff" stroke="#222" stroke-width=".8"/></svg>`;
  }

  private renderStudio() {
    const t = (l: string, v: string, drop = false, extra = "") => this.field("t" + l, l, v, drop, extra);
    return html`<aside class="col">
      <div class="tabs"><span class="grip"></span><button class="on">Farbe</button><button>Farbfelder</button>${this.menuIcon()}</div>
      <div class="color">
        <div class="colortop">
          <div class="colorleft">
            <svg width="40" height="38" viewBox="0 0 40 38" aria-hidden="true">
              <circle cx="14" cy="15" r="9.500" fill="none" stroke="#3c5a9e" stroke-width="4"/>
              <circle cx="26" cy="28" r="12" fill="#333"/><circle cx="26" cy="28" r="11" fill="#fff"/>
              <circle cx="7" cy="33" r="5" fill="#f4f4f4" stroke="#222"/><path d="M4 36l6-6" stroke="#d0343c" stroke-width="1.600"/>
              <path d="M29 5q6 0 7 8M32 2l-4 3 4 3M33 11l3 3 3-3" fill="none" stroke="#b5b5b5" stroke-width="1.300"/></svg>
            <div class="hsl"><span>H: 0</span><span>S: 0</span><span>L: 100</span></div>
          </div>
          <div class="wheel"><div class="ring"></div>
            <svg width="153" height="153" viewBox="0 0 153 153">
              <defs><linearGradient id="g1" x1="0" y1="0" x2="0" y2="1"><stop offset="0" stop-color="#0a0a0a"/><stop offset="1" stop-color="#fff"/></linearGradient>
                <linearGradient id="g2" x1="0" y1="0" x2="1" y2="0"><stop offset="0" stop-color="#ec0020" stop-opacity="0"/><stop offset=".7" stop-color="#ec0020" stop-opacity=".85"/><stop offset="1" stop-color="#ec0020"/></linearGradient></defs>
              <path d="M46 24l89 52.500L46 129z" fill="url(#g1)"/><path d="M46 24l89 52.500L46 129z" fill="url(#g2)"/>
              <circle cx="146" cy="77" r="5" fill="#c4102e" stroke="#f4f4f4" stroke-width="1.500"/>
              <circle cx="45" cy="130" r="5" fill="#fff" stroke="#f4f4f4"/><circle cx="45" cy="130" r="3.500" fill="#fff" stroke="#666" stroke-width=".8"/>
            </svg></div>
          <div class="pick2">${dropper(17)}<svg width="14" height="14" viewBox="0 0 14 14"><circle cx="7" cy="7" r="6" fill="#fff"/></svg></div>
        </div>
        <label for="op">Deckkraft</label>
        <div class="opacity"><svg width="14" height="14" viewBox="0 0 14 14"><circle cx="7" cy="7" r="6.500" fill="#fff"/></svg>
          <input type="range" id="op" .value=${"100"} />
          <span class="sel"><select class="field" aria-label="Deckkraftwert"><option>100 %</option></select></span></div>
      </div>
      <div class="tabs sub"><span class="grip"></span><button class="on">Transformieren</button></div>
      <div class="transform">
        <svg class="anchor" width="40" height="40" viewBox="0 0 40 40" aria-hidden="true"><path d="M5 5h30v30H5z" fill="#666"/>
          ${[2, 17, 32].map((y) => [2, 17, 32].map((x) => svg`<rect x=${x} y=${y} width="6" height="6" fill="#b4b4b4"/>`))}<path d="M0 0h9v9H0z" fill="#fff"/></svg>
        ${t("X:", "72,7 mm")}${t("B:", "81 mm")}${t("Y:", "33 mm")}${t("H:", "48,2 mm")}${t("R:", "0 °", true, "gap")}${t("N:", "0 °", true, "gap")}
        <svg class="link" width="6" height="16" viewBox="0 0 6 16" aria-hidden="true"><rect x="1" y="1" width="4" height="6" rx="2" fill="none" stroke="#aaa"/><rect x="1" y="9" width="4" height="6" rx="2" fill="none" stroke="#aaa"/><path d="M3 5v6" stroke="#ccc"/></svg>
      </div>
      <div class="tabs sub"><span class="grip"></span><button class="on">Effekte</button><button>Stile</button><button>Textstile</button></div>
      <div class="filldeck"><label for="fd">Füllungsdeckkraft:</label><span class="sel w75"><select class="field" id="fd"><option>100 %</option></select></span></div>
      <div class="effects">${effects.map((e) => html`<div class="effect"><label><input type="checkbox" />${e}</label></div>`)}</div>
      <div class="fill"></div>
      <div class="tabs brush"><span class="grip"></span><button>Pinsel</button>${this.menuIcon()}</div>
    </aside>`;
  }

  private renderLayers() {
    return html`<aside class="layers">
      <div class="tabs"><span class="grip"></span><button class="on">Ebenen</button>${this.menuIcon()}</div>
      <div class="lopts"><label for="ld">Deckkraft:</label><span class="sel w75"><select class="field" id="ld"><option>100 %</option></select></span>
        <span class="sel w84"><select class="field" aria-label="Mischmodus"><option>Normal</option></select></span>
        ${ico(12, svg`<circle cx="12" cy="12" r="6.500" fill="none" stroke="#aaa" stroke-width="4.500"/><path d="M12 0v5M12 19v5M0 12h5M19 12h5M3.500 3.500L7 7M17 17l3.500 3.500M20.500 3.500L17 7M7 17l-3.500 3.500" stroke="#aaa" stroke-width="3.500"/>`)}${this.lock()}</div>
      <div class="layer on"><div class="thumb"><i></i></div><span>(Rechteck)</span><input type="checkbox" checked aria-label="Rechteck 1 sichtbar" /></div>
      <div class="layer"><div class="thumb wine"><i></i></div><span>(Rechteck)</span>${this.lock()}<input type="checkbox" checked aria-label="Rechteck 2 sichtbar" /></div>
      <div class="fill"></div>
      <div class="lbar">
        <button class="dark" aria-label="Ebenen bearbeiten">${ico(15, svg`<path d="M12 2l10 4.500L12 11 2 6.500z" fill="#ddd"/><path d="M2 11l10 4.500L22 11M2 15l10 4.500L22 15M2 19l10 4 10-4" fill="none" stroke="#ddd" stroke-width="2"/>`)}</button>
        <div>
          <button aria-label="Maske">${ico(15, svg`<path d="M1 2h22v20H1z" fill="#ddd"/><circle cx="12" cy="12" r="7" fill="#444"/>`)}</button>
          <button aria-label="Anpassung">${ico(15, svg`<circle cx="12" cy="12" r="9.500" fill="#333" stroke="#ddd" stroke-width="2"/><path d="M18.500 5A9.500 9.500 0 1 0 5.500 19z" fill="#e4e4e4"/>`)}</button>
          <button aria-label="Ebeneneffekte"><svg width="18" height="16" viewBox="0 0 18 16"><text x="1" y="12" font-family="Liberation Serif, serif" font-style="italic" font-weight="700" font-size="15" fill="#eee">fx</text></svg></button>
        </div>
        <div>
          <button aria-label="Neue Ebene">${ico(14, svg`<path d="M4 1h11l6 6v16H4z" fill="#d4d4d4"/><path d="M15 1v6h6" fill="#999"/>`)}</button>
          <button aria-label="Neue Pixelebene">${ico(15, svg`<path d="M7 3h10l6 6v14H7z" fill="#bdbdbd"/><path d="M9 8h3v3H9zM15 8h3v3h-3zM12 12h3v3h-3zM18 12h3v3h-3zM9 16h3v3H9zM15 16h3v3h-3z" fill="#555"/><path d="M1 1h8M2 1v9" stroke="#ddd" stroke-dasharray="2 2" stroke-width="2"/>`)}</button>
          <button aria-label="Löschen">${ico(14, svg`<path d="M2 5h20M9 4V1h6v3" fill="none" stroke="#ddd" stroke-width="2"/><path d="M4 7h16l-1 16H5z" fill="#ccc"/><path d="M9 9v12M12 9v12M15 9v12" stroke="#444" stroke-width="1.300"/>`)}</button>
        </div>
      </div>
    </aside>`;
  }

  render() {
    return html`
      <svg class="defs" aria-hidden="true"><defs><linearGradient id="blue" x1="0" y1="0" x2="0" y2="1"><stop offset="0" stop-color="#5aa9dd"/><stop offset="1" stop-color="#2f7fb8"/></linearGradient></defs></svg>
      ${this.renderTop()}
      <div class="body">
        <div class="tools">
          <div class="toolgrid">${tools.map((t) => html`<button class="${t.name === this.tool ? "on" : ""} ${t.more ? "more" : ""}" aria-label=${t.name} @click=${() => (this.tool = t.name)}>${ico(18, t.body)}</button>`)}</div>
          ${this.well()}
        </div>
        ${this.renderDoc()} ${this.renderStudio()} ${this.renderLayers()}
      </div>
      <footer class="status">'Rechteck' ausgewählt. <b>Ziehen</b> = Auswahl verschieben. <b>Klick</b> auf anderes Objekt = Objekt auswählen. <b>Klick</b> auf leeren Bereich = Auswahl aufheben.</footer>
      ${this.renderDialog()}`;
  }
}
